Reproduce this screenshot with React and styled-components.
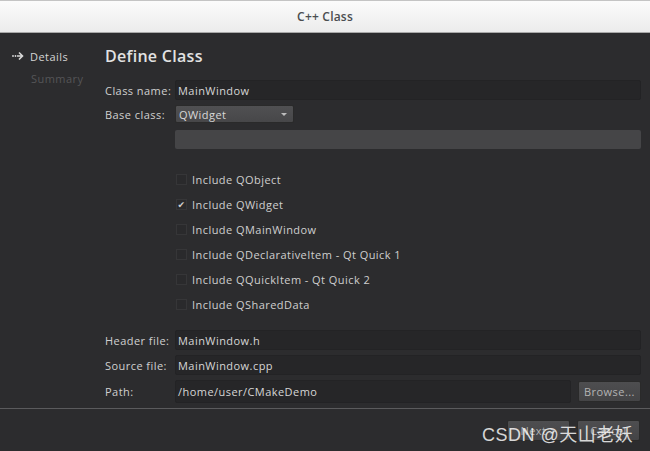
import React from "react";
import styled, { createGlobalStyle } from "styled-components";

const Global = createGlobalStyle`
  html, body { margin: 0; padding: 0; background: #2c2c2e; }
  body { font-family: "Open Sans", "DejaVu Sans", sans-serif; letter-spacing: 0.45px; }
  #root { width: 650px; height: 451px; overflow: hidden; }
`;

const Window = styled.div`
  position: relative;
  width: 650px;
  height: 451px;
  background: #2c2c2e;
  display: flex;
  flex-direction: column;
`;

const TitleBar = styled.div`
  height: 31px;
  border-top: 1px solid #c4c4c4;
  border-bottom: 1px solid #a9a9a9;
  background: linear-gradient(#fbfbfb, #ececec);
  display: flex;
  align-items: center;
  justify-content: center;
  color: #4a4d50;
  font-size: 12px;
  font-weight: 600;
  letter-spacing: 0.2px;
`;

const Body = styled.div`
  display: flex;
  height: 371px;
`;

const Sidebar = styled.div`
  width: 105px;
  padding-top: 16px;
  display: flex;
  flex-direction: column;
  gap: 8px;
`;

const Step = styled.div`
  display: flex;
  align-items: center;
  height: 14px;
  padding-left: ${(p) => (p.$active ? "12px" : "31px")};
  gap: 6px;
  font-size: 11px;
  color: ${(p) => (p.$active ? "#d4d4d4" : "#555557")};
`;

const Content = styled.div`
  flex: 1;
  padding-right: 9px;
  display: flex;
  flex-direction: column;
`;

const Heading = styled.h1`
  margin: 14px 0 14px;
  font-size: 16px;
  font-weight: 600;
  color: #e2e2e2;
  height: 19px;
  line-height: 19px;
  letter-spacing: 0.3px;
`;

const FormRow = styled.div`
  display: grid;
  grid-template-columns: 70px 1fr ${(p) => (p.$button ? "70px" : "")};
  align-items: center;
  height: ${(p) => p.$h || 20}px;
  margin-bottom: ${(p) => p.$mb ?? 5}px;
`;

const Label = styled.div`
  font-size: 11px;
  color: #d0d0d0;
  white-space: nowrap;
`;

const Field = styled.div`
  height: ${(p) => p.$h || 20}px;
  box-sizing: border-box;
  border: 1px solid #232325;
  border-radius: 2px;
  background: #262628;
  color: #d6d6d6;
  font-size: 11px;
  padding-left: 2px;
  display: flex;
  align-items: center;
`;

const EmptyField = styled.div`
  height: 19px;
  border-radius: 2px;
  background: #454547;
`;

const Combo = styled.div`
  width: 119px;
  height: 18px;
  box-sizing: border-box;
  border: 1px solid #2a2a2a;
  border-radius: 2px;
  background: linear-gradient(#505052, #474749);
  color: #d8d8d8;
  font-size: 11px;
  padding: 0 6px 0 3px;
  display: flex;
  align-items: center;
  justify-content: space-between;
`;

const Caret = styled.span`
  width: 0;
  height: 0;
  border-left: 3px solid transparent;
  border-right: 3px solid transparent;
  border-top: 3px solid #bdbdbd;
`;

const Checks = styled.div`
  padding-left: 71px;
  margin: 23px 0 19px;
  display: flex;
  flex-direction: column;
  gap: 11px;
`;

const CheckRow = styled.div`
  display: flex;
  align-items: center;
  gap: 5px;
  height: 14px;
  font-size: 11px;
  color: #cfcfcf;
`;

const Box = styled.span`
  width: 11px;
  height: 11px;
  box-sizing: border-box;
  border: 1px solid #363638;
  background: #2a2a2c;
  display: flex;
  align-items: center;
  justify-content: center;
  color: #d0d0d0;
  font-size: 9px;
  line-height: 1;
`;

const Button = styled.div`
  justify-self: end;
  width: 63px;
  height: 21px;
  box-sizing: border-box;
  border: 1px solid #2a2a2a;
  border-radius: 2px;
  background: linear-gradient(#4e4e50, #444446);
  color: #b4b4b4;
  font-size: 11px;
  display: flex;
  align-items: center;
  justify-content: center;
`;

const Separator = styled.div`
  height: 1px;
  background: #5b5b5d;
  margin-top: 4px;
`;

const Footer = styled.div`
  display: flex;
  justify-content: flex-end;
  gap: 7px;
  padding: 11px 10px 0 0;
`;

const Watermark = styled.div`
  position: absolute;
  left: 482px;
  top: 420px;
  font-family: "Liberation Sans", "Noto Sans CJK SC", sans-serif;
  font-size: 18px;
  color: rgba(255, 255, 255, 0.82);
  letter-spacing: 0.5px;
`;

const Arrow = () => (
  <svg width="12" height="10" viewBox="0 0 12 10">
    <circle cx="1" cy="5" r="0.9" fill="#d8d8d8" />
    <circle cx="3.5" cy="5" r="0.9" fill="#d8d8d8" />
    <path d="M5 5h5.5M7 1.5l3.5 3.5L7 8.5" stroke="#d8d8d8" strokeWidth="1.6" fill="none" />
  </svg>
);

const includes = [
  ["Include QObject", false],
  ["Include QWidget", true],
  ["Include QMainWindow", false],
  ["Include QDeclarativeItem - Qt Quick 1", false],
  ["Include QQuickItem - Qt Quick 2", false],
  ["Include QSharedData", false],
];

export default function App() {
  return (
    <>
      <Global />
      <Window>
        <TitleBar>C++ Class</TitleBar>
        <Body>
          <Sidebar>
            <Step $active>
              <Arrow />
              Details
            </Step>
            <Step>Summary</Step>
          </Sidebar>
          <Content>
            <Heading>Define Class</Heading>
            <FormRow>
              <Label>Class name:</Label>
              <Field>MainWindow</Field>
            </FormRow>
            <FormRow $h={18} $mb={7}>
              <Label>Base class:</Label>
              <Combo>
                QWidget
                <Caret />
              </Combo>
            </FormRow>
            <FormRow $h={19} $mb={0}>
              <span />
              <EmptyField />
            </FormRow>
            <Checks>
              {includes.map(([text, on]) => (
                <CheckRow key={text}>
                  <Box>{on ? "✔" : ""}</Box>
                  {text}
                </CheckRow>
              ))}
            </Checks>
            <FormRow>
              <Label>Header file:</Label>
              <Field>MainWindow.h</Field>
            </FormRow>
            <FormRow>
              <Label>Source file:</Label>
              <Field>MainWindow.cpp</Field>
            </FormRow>
            <FormRow $h={23} $mb={0} $button>
              <Label>Path:</Label>
              <Field $h={23}>/home/user/CMakeDemo</Field>
              <Button>Browse...</Button>
            </FormRow>
          </Content>
        </Body>
        <Separator />
        <Footer>
          <Button>Next &gt;</Button>
          <Button>Cancel</Button>
        </Footer>
        <Watermark>CSDN @天山老妖</Watermark>
      </Window>
    </>
  );
}
